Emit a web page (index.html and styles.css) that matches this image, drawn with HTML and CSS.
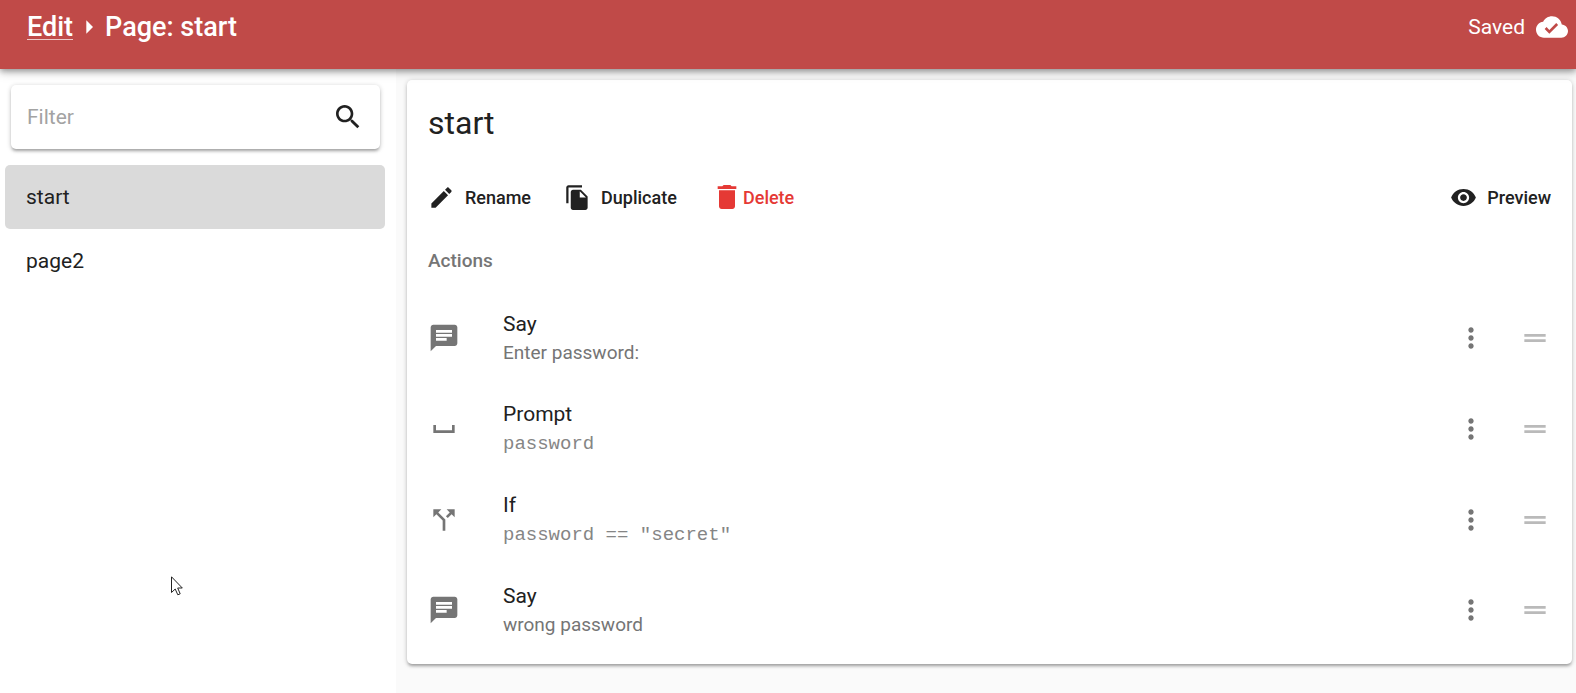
FILE: index.html
```
<!DOCTYPE html>
<html lang="en">
<head>
  <meta charset="UTF-8">
  <meta name="viewport" content="width=device-width, initial-scale=1.0">
  <title>Page: start</title>
  <link rel="stylesheet" href="styles.css">
</head>
<body>

<header class="toolbar">
  <nav class="breadcrumb">
    <a href="#edit">Edit</a>
    <svg class="icon" viewBox="0 0 24 24"><path d="M10 17l5-5-5-5v10z"/></svg>
    <h1>Page: start</h1>
  </nav>
  <div class="status">
    <span>Saved</span>
    <svg class="icon" viewBox="0 0 24 24"><path d="M19.35 10.04C18.67 6.59 15.64 4 12 4 9.11 4 6.6 5.64 5.35 8.04 2.34 8.36 0 10.91 0 14c0 3.31 2.69 6 6 6h13c2.76 0 5-2.24 5-5 0-2.64-2.05-4.78-4.65-4.96zM10 17l-3.5-3.5 1.41-1.41L10 14.17 15.18 9l1.41 1.41L10 17z"/></svg>
  </div>
</header>

<div class="layout">
  <aside class="sidebar">
    <div class="filter">
      <input type="text" id="filter" placeholder="Filter" aria-label="Filter">
      <label for="filter">
        <svg class="icon" viewBox="0 0 24 24"><path d="M15.5 14h-.79l-.28-.27C15.41 12.59 16 11.11 16 9.5 16 5.91 13.09 3 9.5 3S3 5.91 3 9.5 5.91 16 9.5 16c1.61 0 3.09-.59 4.23-1.57l.27.28v.79l5 4.99L20.49 19l-4.99-5zm-6 0C7.01 14 5 11.99 5 9.5S7.01 5 9.5 5 14 7.01 14 9.5 11.99 14 9.5 14z"/></svg>
      </label>
    </div>
    <nav class="pages">
      <a class="page active" href="#start">start</a>
      <a class="page" href="#page2">page2</a>
    </nav>
  </aside>

  <main class="content">
    <section class="card">
      <h2>start</h2>
      <div class="buttons">
        <button class="button rename" type="button">
          <svg class="icon small" viewBox="0 0 24 24"><path d="M3 17.25V21h3.75L17.81 9.94l-3.75-3.75L3 17.25zM20.71 7.04c.39-.39.39-1.02 0-1.41l-2.34-2.34c-.39-.39-1.02-.39-1.41 0l-1.83 1.83 3.75 3.75 1.83-1.83z"/></svg>
          Rename
        </button>
        <button class="button duplicate" type="button">
          <svg class="icon small" viewBox="0 0 24 24"><path d="M16 1H4c-1.1 0-2 .9-2 2v14h2V3h12V1zm-1 4l6 6v10c0 1.1-.9 2-2 2H7.99C6.89 23 6 22.1 6 21l.01-14c0-1.1.89-2 1.99-2h7zm-1 7h5.5L14 6.5V12z"/></svg>
          Duplicate
        </button>
        <button class="button delete" type="button">
          <svg class="icon" viewBox="0 0 24 24"><path d="M6 19c0 1.1.9 2 2 2h8c1.1 0 2-.9 2-2V7H6v12zM19 4h-3.5l-1-1h-5l-1 1H5v2h14V4z"/></svg>
          Delete
        </button>
        <button class="button preview" type="button">
          <svg class="icon small" viewBox="0 0 24 24"><path d="M12 4.5C7 4.5 2.73 7.61 1 12c1.73 4.39 6 7.5 11 7.5s9.27-3.11 11-7.5c-1.73-4.39-6-7.5-11-7.5zM12 17c-2.76 0-5-2.24-5-5s2.24-5 5-5 5 2.24 5 5-2.24 5-5 5zm0-8c-1.66 0-3 1.34-3 3s1.34 3 3 3 3-1.34 3-3-1.34-3-3-3z"/></svg>
          Preview
        </button>
      </div>

      <h3>Actions</h3>
      <ul class="actions">
        <li class="action">
          <svg class="icon" viewBox="0 0 24 24"><path d="M20 2H4c-1.1 0-1.99.9-1.99 2L2 22l4-4h14c1.1 0 2-.9 2-2V4c0-1.1-.9-2-2-2zM6 9h12v2H6V9zm8 5H6v-2h8v2zm4-6H6V6h12v2z"/></svg>
          <div class="text">
            <div class="name">Say</div>
            <div class="detail">Enter password:</div>
          </div>
          <button class="more" type="button" aria-label="More">
            <svg class="icon" viewBox="0 0 24 24"><path d="M12 8c1.1 0 2-.9 2-2s-.9-2-2-2-2 .9-2 2 .9 2 2 2zm0 2c-1.1 0-2 .9-2 2s.9 2 2 2 2-.9 2-2-.9-2-2-2zm0 6c-1.1 0-2 .9-2 2s.9 2 2 2 2-.9 2-2-.9-2-2-2z"/></svg>
          </button>
          <svg class="icon handle" viewBox="0 0 24 24"><path d="M20 9H4v2h16V9zM4 15h16v-2H4v2z"/></svg>
        </li>
        <li class="action">
          <svg class="icon" viewBox="0 0 24 24"><path d="M18 9v4H6V9H4v6h16V9z"/></svg>
          <div class="text">
            <div class="name">Prompt</div>
            <div class="detail code">password</div>
          </div>
          <button class="more" type="button" aria-label="More">
            <svg class="icon" viewBox="0 0 24 24"><path d="M12 8c1.1 0 2-.9 2-2s-.9-2-2-2-2 .9-2 2 .9 2 2 2zm0 2c-1.1 0-2 .9-2 2s.9 2 2 2 2-.9 2-2-.9-2-2-2zm0 6c-1.1 0-2 .9-2 2s.9 2 2 2 2-.9 2-2-.9-2-2-2z"/></svg>
          </button>
          <svg class="icon handle" viewBox="0 0 24 24"><path d="M20 9H4v2h16V9zM4 15h16v-2H4v2z"/></svg>
        </li>
        <li class="action">
          <svg class="icon" viewBox="0 0 24 24"><path d="M14 4l2.29 2.29-2.88 2.88 1.42 1.42 2.88-2.88L20 10V4zm-4 0H4v6l2.29-2.29 4.71 4.7V20h2v-8.41l-5.29-5.3z"/></svg>
          <div class="text">
            <div class="name">If</div>
            <div class="detail code">password == "secret"</div>
          </div>
          <button class="more" type="button" aria-label="More">
            <svg class="icon" viewBox="0 0 24 24"><path d="M12 8c1.1 0 2-.9 2-2s-.9-2-2-2-2 .9-2 2 .9 2 2 2zm0 2c-1.1 0-2 .9-2 2s.9 2 2 2 2-.9 2-2-.9-2-2-2zm0 6c-1.1 0-2 .9-2 2s.9 2 2 2 2-.9 2-2-.9-2-2-2z"/></svg>
          </button>
          <svg class="icon handle" viewBox="0 0 24 24"><path d="M20 9H4v2h16V9zM4 15h16v-2H4v2z"/></svg>
        </li>
        <li class="action">
          <svg class="icon" viewBox="0 0 24 24"><path d="M20 2H4c-1.1 0-1.99.9-1.99 2L2 22l4-4h14c1.1 0 2-.9 2-2V4c0-1.1-.9-2-2-2zM6 9h12v2H6V9zm8 5H6v-2h8v2zm4-6H6V6h12v2z"/></svg>
          <div class="text">
            <div class="name">Say</div>
            <div class="detail">wrong password</div>
          </div>
          <button class="more" type="button" aria-label="More">
            <svg class="icon" viewBox="0 0 24 24"><path d="M12 8c1.1 0 2-.9 2-2s-.9-2-2-2-2 .9-2 2 .9 2 2 2zm0 2c-1.1 0-2 .9-2 2s.9 2 2 2 2-.9 2-2-.9-2-2-2zm0 6c-1.1 0-2 .9-2 2s.9 2 2 2 2-.9 2-2-.9-2-2-2z"/></svg>
          </button>
          <svg class="icon handle" viewBox="0 0 24 24"><path d="M20 9H4v2h16V9zM4 15h16v-2H4v2z"/></svg>
        </li>
      </ul>
    </section>
  </main>
</div>

<svg class="cursor" viewBox="0 0 12 20"><path d="M.5 .8V16.500L4.200 13l2.600 5.800 2.400-1L6.700 12h4.600z"/></svg>

</body>
</html>
```
FILE: styles.css
```
* {
  box-sizing: border-box;
}

body {
  margin: 0;
  min-height: 100vh;
  display: flex;
  flex-direction: column;
  font-family: Roboto, sans-serif;
  font-size: 21px;
  color: #212121;
  background-color: #fafafa;
}

h1, h2, h3 {
  margin: 0;
}

.icon {
  display: block;
  flex: none;
  width: 32px;
  height: 32px;
  fill: currentColor;
}

.icon.small {
  width: 27px;
  height: 27px;
}

.toolbar {
  position: relative;
  z-index: 1;
  display: flex;
  justify-content: space-between;
  height: 69px;
  padding: 11px 8px 0 27px;
  color: #fff;
  background-color: #c04a48;
  box-shadow: 0 2px 6px rgba(0, 0, 0, 0.35), 0 4px 10px rgba(0, 0, 0, 0.15);
}

.breadcrumb, .status {
  display: flex;
  align-items: center;
  height: 32px;
}

.breadcrumb {
  font-size: 27px;
  font-weight: 500;
}

.breadcrumb a {
  color: #fff;
  line-height: 24px;
  text-decoration: none;
  border-bottom: 1px solid rgba(255, 255, 255, 0.7);
}

.breadcrumb h1 {
  font-size: 27px;
  font-weight: 500;
}

.status {
  gap: 11px;
}

.layout {
  flex: 1;
  display: flex;
}

.sidebar {
  width: 396px;
  flex: none;
  padding: 16px 11px 0 5px;
  background-color: #fff;
}

.filter {
  display: flex;
  align-items: center;
  height: 64px;
  margin: 0 5px 16px 6px;
  padding: 0 16px;
  border-radius: 5px;
  background-color: #fff;
  box-shadow: 0 3px 3px -1px rgba(0, 0, 0, 0.25), 0 1px 5px rgba(0, 0, 0, 0.22);
}

.filter input {
  flex: 1;
  min-width: 0;
  padding: 0;
  border: none;
  outline: none;
  font: inherit;
  color: inherit;
  background: none;
}

.filter input::placeholder {
  color: #a3a3a3;
}

.page {
  display: block;
  padding: 0 21px;
  line-height: 64px;
  border-radius: 5px;
  color: inherit;
  text-decoration: none;
}

.page.active {
  background-color: #dadada;
}

.content {
  flex: 1;
  padding: 11px 4px 28px 11px;
}

.card {
  padding: 21px 21px 9px;
  border-radius: 5px;
  background-color: #fff;
  box-shadow: 0 3px 3px -1px rgba(0, 0, 0, 0.25), 0 1px 5px rgba(0, 0, 0, 0.22);
}

.card h2 {
  margin-bottom: 19px;
  font-size: 32px;
  font-weight: 400;
  line-height: 45px;
}

.card h3 {
  font-size: 19px;
  font-weight: 500;
  line-height: 64px;
  color: #757575;
}

.buttons {
  display: flex;
  align-items: center;
  height: 64px;
}

.button {
  display: flex;
  align-items: center;
  gap: 10px;
  height: 48px;
  padding: 0;
  border: none;
  font: inherit;
  font-size: 18px;
  font-weight: 500;
  color: inherit;
  background: none;
  cursor: pointer;
}

.button.rename {
  min-width: 136px;
}

.button.duplicate {
  min-width: 147px;
}

.button.delete {
  gap: 0;
  color: #e53935;
}

.button.preview {
  margin-left: auto;
}

.actions {
  margin: 0;
  padding: 0;
  list-style: none;
}

.action {
  display: flex;
  align-items: center;
  padding: 16px 0;
  color: #757575;
}

.text {
  flex: 1;
  margin-left: 43px;
}

.name {
  line-height: 30px;
  color: #212121;
}

.detail {
  font-size: 19px;
  line-height: 28px;
}

.code {
  padding-top: 1px;
  font-family: "Liberation Mono", monospace;
  color: #858585;
}

.more {
  padding: 0;
  border: none;
  color: inherit;
  background: none;
  cursor: pointer;
}

.handle {
  margin-left: 32px;
  color: #bababa;
}

.cursor {
  position: absolute;
  left: 171px;
  top: 576px;
  width: 12px;
  height: 20px;
  fill: #fff;
  stroke: #222;
  pointer-events: none;
}
```
